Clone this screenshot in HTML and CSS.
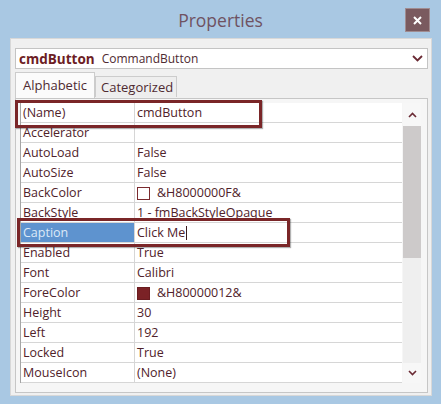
FILE: index.html
```html
<!DOCTYPE html>
<html>
<head>
<meta charset="utf-8">
<link rel="stylesheet" href="styles.css">
</head>
<body>
<div class="window">
  <div class="titlebar">
    <span></span>
    <h1 class="title">Properties</h1>
    <button class="close" aria-label="Close">
      <svg width="9" height="9" viewBox="0 0 9 9"><path d="M1 1 L8 8 M8 1 L1 8" stroke="#ffffff" stroke-width="2"/></svg>
    </button>
  </div>
  <div class="panel">
    <div class="combo">
      <span class="obj-name">cmdButton</span>
      <span class="obj-type">CommandButton</span>
      <svg class="combo-arrow" width="11" height="7" viewBox="0 0 11 7"><polyline points="1,1 5.5,5.5 10,1" fill="none" stroke="#6a2a34" stroke-width="1.8"/></svg>
    </div>
    <div class="tabs">
      <div class="tab active">Alphabetic</div>
      <div class="tab">Categorized</div>
    </div>
    <div class="grid">
      <div class="rows">
        <div class="row"><div class="name">(Name)</div><div class="value">cmdButton</div></div>
        <div class="row"><div class="name">Accelerator</div><div class="value"></div></div>
        <div class="row"><div class="name">AutoLoad</div><div class="value">False</div></div>
        <div class="row"><div class="name">AutoSize</div><div class="value">False</div></div>
        <div class="row"><div class="name">BackColor</div><div class="value"><span class="swatch empty"></span>&amp;H8000000F&amp;</div></div>
        <div class="row"><div class="name">BackStyle</div><div class="value">1 - fmBackStyleOpaque</div></div>
        <div class="row selected"><div class="name">Caption</div><div class="value">Click Me<span class="caret"></span></div></div>
        <div class="row"><div class="name">Enabled</div><div class="value">True</div></div>
        <div class="row"><div class="name">Font</div><div class="value">Calibri</div></div>
        <div class="row"><div class="name">ForeColor</div><div class="value"><span class="swatch filled"></span>&amp;H80000012&amp;</div></div>
        <div class="row"><div class="name">Height</div><div class="value">30</div></div>
        <div class="row"><div class="name">Left</div><div class="value">192</div></div>
        <div class="row"><div class="name">Locked</div><div class="value">True</div></div>
        <div class="row"><div class="name">MouseIcon</div><div class="value">(None)</div></div>
      </div>
      <div class="scrollbar">
        <div class="sb-btn up"><svg width="9" height="6" viewBox="0 0 9 6"><polyline points="1,5 4.5,1.5 8,5" fill="none" stroke="#6a2a34" stroke-width="1.6"/></svg></div>
        <div class="thumb"></div>
        <div class="track"></div>
        <div class="sb-btn down"><svg width="9" height="6" viewBox="0 0 9 6"><polyline points="1,1 4.5,4.5 8,1" fill="none" stroke="#6a2a34" stroke-width="1.6"/></svg></div>
      </div>
      <div class="hl hl-name"></div>
      <div class="hl hl-caption"></div>
    </div>
  </div>
</div>
</body>
</html>
```

FILE: styles.css
```css
* { box-sizing: border-box; }
html, body { margin: 0; padding: 0; }
body {
  width: 441px;
  height: 404px;
  background: #a9c8e3;
  font-family: "Open Sans", "Noto Sans", sans-serif;
  overflow: hidden;
}
.window { width: 441px; }
.titlebar {
  height: 38px;
  display: grid;
  grid-template-columns: 1fr auto 1fr;
}
.title {
  margin: 0;
  padding-top: 10px;
  font-size: 17.5px;
  line-height: 20px;
  font-weight: normal;
  color: #6f5262;
}
.close {
  justify-self: end;
  align-self: start;
  margin: 8px 11px 0 0;
  width: 25px;
  height: 24px;
  padding: 0;
  border: 1px solid #a08c90;
  background: #7a5a5f;
  display: flex;
  align-items: center;
  justify-content: center;
}
.panel {
  margin-left: 10px;
  width: 422px;
  height: 358px;
  background: #f0f0f0;
  border: 1px solid #d8d8d8;
  padding: 9px 3px 2px 4px;
}
.combo {
  height: 21px;
  background: #ffffff;
  border: 1px solid #c4c4c4;
  display: flex;
  align-items: center;
  padding-left: 3px;
  font-size: 12px;
  color: #4e2a31;
}
.obj-name { font-weight: bold; font-size: 13.5px; color: #6d1d24; margin-right: 7px; }
.combo-arrow { margin-left: auto; margin-right: 4px; }
.tabs {
  margin-top: 3px;
  height: 26px;
  display: flex;
  align-items: flex-start;
  font-size: 13px;
  color: #4e2a31;
}
.tab {
  height: 21px;
  margin-top: 4px;
  padding: 0 5px;
  border: 1px solid #cccccc;
  border-bottom: none;
  line-height: 20px;
  background: #eeeeee;
  width: 82px;
}
.tab.active {
  height: 26px;
  margin-top: 0;
  width: 80px;
  background: #fbfbfb;
  line-height: 24px;
  padding-left: 7px;
  position: relative;
  z-index: 1;
}
.grid {
  position: relative;
  height: 295px;
  border: 1px solid #c6c6c6;
  background: #f6f6f6;
  padding: 4px 6px 9px 4px;
  display: flex;
  gap: 1px;
}
.rows {
  width: 382px;
  border-left: 1px solid #a5a5a5;
  background: #ffffff;
  font-size: 12.5px;
  color: #50222a;
}
.row {
  height: 20px;
  display: grid;
  grid-template-columns: 114px 1fr;
  border-bottom: 1px solid #d6d6d6;
}
.name {
  padding-left: 2px;
  padding-top: 1px;
  border-right: 1px solid #d6d6d6;
  line-height: 18px;
  white-space: nowrap;
}
.value {
  padding-left: 2px;
  padding-top: 1px;
  line-height: 18px;
  display: flex;
  align-items: center;
  white-space: nowrap;
}
.row.selected .name { background: #5e93cf; color: #dce9f7; }
.caret {
  display: inline-block;
  width: 1px;
  height: 14px;
  background: #3a1a1e;
  margin-left: 1px;
}
.swatch {
  width: 13px;
  height: 13px;
  margin-right: 7px;
  flex: none;
}
.swatch.empty { border: 1px solid #7a2a2e; background: #ffffff; }
.swatch.filled { background: #7b2226; border: 1px solid #6a1c20; }
.scrollbar {
  width: 18px;
  display: flex;
  flex-direction: column;
  background: #ededed;
}
.sb-btn {
  display: flex;
  align-items: center;
  justify-content: center;
  background: #f7f7f7;
}
.sb-btn.up { height: 23px; }
.sb-btn.down { height: 20px; }
.thumb { height: 132px; background: #cdcaca; }
.track { flex: 1; background: #efefef; }
.hl {
  position: absolute;
  border: 3px solid #7a2628;
  box-shadow: 1px 1px 1px rgba(0, 0, 0, 0.3);
}
.hl-name { left: -1px; top: 1px; width: 247px; height: 28px; }
.hl-caption { left: 1px; top: 119px; width: 273px; height: 29px; }
```
